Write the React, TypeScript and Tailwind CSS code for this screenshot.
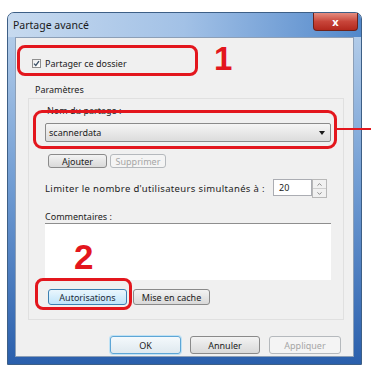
import { ChevronDown, ChevronUp } from "lucide-react";

const font = "font-['Noto_Sans',sans-serif]";

const Btn = ({
  label,
  className = "",
  disabled = false,
  variant = "normal",
}: {
  label: string;
  className?: string;
  disabled?: boolean;
  variant?: "normal" | "default" | "hover";
}) => {
  const look = disabled
    ? "border-[#b5b9bd] bg-[#f4f4f4] text-[#a6a6a6]"
    : variant === "hover"
    ? "border-[#3c7fb1] bg-gradient-to-b from-[#eaf6fd] to-[#bfe4fa] text-[#1d2a3a]"
    : variant === "default"
    ? "border-[#5ea6d6] bg-gradient-to-b from-[#f4f9fc] to-[#dfe9ef] text-[#222] shadow-[0_0_0_1px_#bfe2f5]"
    : "border-[#8a8a8a] bg-gradient-to-b from-[#f3f3f3] to-[#d9d9d9] text-[#222]";
  return (
    <div
      className={`flex items-center justify-center rounded-[3px] border text-[9px] leading-none ${look} ${className}`}
    >
      {label}
    </div>
  );
};

export default function App() {
  return (
    <div className={`relative h-[371px] w-[371px] overflow-hidden bg-white pl-[7px] pt-[12px] ${font}`}>
      {/* window frame */}
      <div className="flex h-[353px] w-[355px] flex-col rounded-t-[7px] border border-[#3d5f86] bg-gradient-to-b from-[#bcd3ec] via-[#6f9bd2] to-[#2a5fac]">
        {/* title bar */}
        <div className="flex h-[24px] shrink-0 items-start justify-between rounded-t-[6px] bg-gradient-to-r from-[#c7daef] via-[#a2c1e6] to-[#5288ca]">
          <span className="pl-[5px] pt-[7px] text-[10.5px] leading-none text-[#1a1a1a]">
            Partage avancé
          </span>
          <div className="mr-[3px] flex h-[18px] w-[45px] items-center justify-center rounded-b-[4px] border border-t-0 border-[#6e2118] bg-gradient-to-b from-[#e48c80] via-[#c8453a] to-[#b3281d] text-[11px] font-bold leading-none text-white">
            x
          </div>
        </div>

        {/* client area */}
        <div className="mx-[7px] mb-[7px] flex flex-1 flex-col border border-[#8c9fb7] bg-[#f0f0f0] text-[#222]">
          {/* share checkbox */}
          <div className="ml-[16px] mt-[21px] flex items-center gap-[4px]">
            <div className="flex h-[9px] w-[9px] items-center justify-center border border-[#8f8f8f] bg-gradient-to-br from-[#eeeeee] to-[#ffffff]">
              <svg width="7" height="7" viewBox="0 0 7 7">
                <path d="M1 3.6 L2.8 5.4 L6 1.2" fill="none" stroke="#3a4f66" strokeWidth="1.3" />
              </svg>
            </div>
            <span className="text-[9px] leading-none">Partager ce dossier</span>
          </div>

          <div className="ml-[19px] mt-[17px] text-[9px] leading-none">Paramètres</div>

          {/* group box */}
          <div className="ml-[12px] mt-[4px] flex h-[222px] w-[316px] flex-col border border-[#e0e0e0] pl-[16px]">
            <div className="ml-[2px] mt-[7px] text-[9px] leading-none">Nom du partage :</div>

            <div className="mt-[8px] flex h-[19px] w-[286px] items-center justify-between rounded-[2px] border border-[#8a8a8a] bg-gradient-to-b from-[#f5f5f5] to-[#dcdcdc] pl-[3px] pr-[5px]">
              <span className="text-[9px] leading-none">scannerdata</span>
              <svg width="6" height="4" viewBox="0 0 6 4">
                <path d="M0 0 H6 L3 4 Z" fill="#1a1a1a" />
              </svg>
            </div>

            <div className="ml-[3px] mt-[12px] flex gap-[3px]">
              <Btn label="Ajouter" className="h-[14px] w-[59px]" />
              <Btn label="Supprimer" className="h-[14px] w-[56px]" disabled />
            </div>

            <div className="mt-[11px] flex items-start">
              <span className="mt-[5px] w-[228px] text-[9.5px] leading-none tracking-[0.35px]">
                Limiter le nombre d'utilisateurs simultanés à :
              </span>
              <div className="flex h-[17px] w-[39px] items-center border border-[#abadb3] bg-white pl-[5px] text-[9px] leading-none">
                20
              </div>
              <div className="flex h-[19px] w-[15px] flex-col border border-[#b8b8b8] bg-[#f1f1f1]">
                <div className="flex flex-1 items-center justify-center border-b border-[#cfcfcf]">
                  <ChevronUp size={7} strokeWidth={3} color="#7a7a7a" />
                </div>
                <div className="flex flex-1 items-center justify-center">
                  <ChevronDown size={7} strokeWidth={3} color="#7a7a7a" />
                </div>
              </div>
            </div>

            <div className="mt-[14px] text-[9px] leading-none">Commentaires :</div>
            <div className="mt-[2px] h-[57px] w-[286px] border-t border-[#8e8e8e] bg-white" />

            <div className="ml-[3px] mt-[9px] flex gap-[6px]">
              <Btn label="Autorisations" className="h-[16px] w-[79px]" variant="hover" />
              <Btn label="Mise en cache" className="h-[16px] w-[77px]" />
            </div>
          </div>

          {/* dialog buttons */}
          <div className="mr-[12px] mt-[16px] flex justify-end gap-[9px]">
            <Btn label="OK" className="h-[18px] w-[71px]" variant="default" />
            <Btn label="Annuler" className="h-[18px] w-[70px]" />
            <Btn label="Appliquer" className="h-[18px] w-[72px]" disabled />
          </div>
        </div>
      </div>

      {/* red annotations */}
      <div className="absolute left-[17px] top-[45px] h-[31px] w-[181px] rounded-[8px] border-[3px] border-[#e3161d]" />
      <div className="absolute left-[214px] top-[42px] text-[33px] font-bold leading-none text-[#e3161d] font-['Liberation_Sans',sans-serif]">
        1
      </div>
      <div className="absolute left-[33px] top-[110px] h-[39px] w-[304px] rounded-[9px] border-[3px] border-[#e3161d]" />
      <div className="absolute left-[337px] top-[128px] h-[2px] w-[34px] bg-[#e3161d]" />
      <div className="absolute left-[74px] top-[239px] text-[35px] font-bold leading-none text-[#e3161d] font-['Liberation_Sans',sans-serif]">
        2
      </div>
      <div className="absolute left-[35px] top-[278px] h-[32px] w-[97px] rounded-[8px] border-[3px] border-[#e3161d]" />
    </div>
  );
}
